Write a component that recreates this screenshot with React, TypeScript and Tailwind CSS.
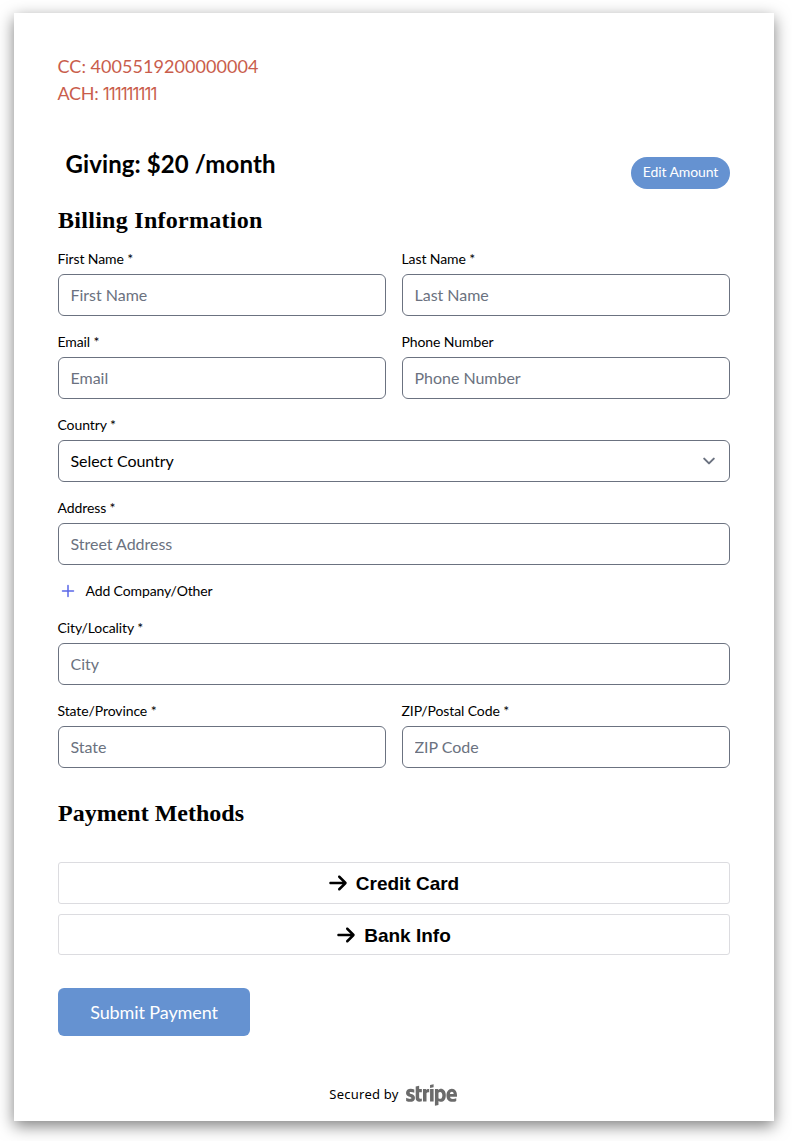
import React from "react";
import { FaStripe } from "react-icons/fa";
import { FaArrowRight } from "react-icons/fa6";

const body = "font-['Lato','Open_Sans',sans-serif]";
const labelText = "-ml-[0.5px] block h-[25px] text-[14px] leading-[20px] tracking-[-0.1px] whitespace-nowrap";

function Field({ label, placeholder }: { label: string; placeholder: string }) {
  return (
    <label className="block min-w-0 flex-1">
      <span className={labelText}>{label}</span>
      <input
        type="text"
        placeholder={placeholder}
        className="block h-[42px] w-full rounded-[6px] border border-[#6b7280] bg-white pr-3 pb-[2px] pl-[11.5px] text-[16px] leading-6 tracking-[-0.02px] placeholder:text-[#6b7280] placeholder:opacity-100"
      />
    </label>
  );
}

function PayOption({ children, className }: { children: string; className: string }) {
  return (
    <button
      type="button"
      className={`flex w-full items-center justify-center gap-[9px] rounded-[3px] border border-[#dcdce0] bg-white font-['Liberation_Sans',sans-serif] text-[19px] font-bold ${className}`}
    >
      <FaArrowRight className="h-5 w-[18px] -translate-y-px" />
      {children}
    </button>
  );
}

export default function App() {
  return (
    <div className="h-[1141px] bg-white pt-[13px] pl-[14px]">
      <main
        className={`h-[1108px] w-[760px] bg-white px-[44px] pt-[40px] text-black shadow-[0_5px_15px_rgba(0,0,0,0.5)] ${body}`}
      >
        <div className="-ml-[0.5px] h-[54px] text-[18px] leading-[27px] text-[#c95d4c]">
          <p className="tracking-[0.05px]">CC: 4005519200000004</p>
          <p className="tracking-[-0.3px]">
            ACH: <span className="font-['Inter',sans-serif] text-[17px] tracking-[-0.95px]">111111111</span>
          </p>
        </div>

        <div className="mt-[41px] flex h-[41px] justify-between pl-[7.5px]">
          <h1 className="pt-[2px] text-[24px] leading-[28px] font-bold tracking-[0.1px]">Giving: $20 /month</h1>
          <button
            type="button"
            className="mt-[9px] h-8 w-[99px] rounded-full bg-[#6592d1] pb-[2px] text-[14px] leading-5 tracking-[-0.1px] whitespace-nowrap text-white"
          >
            Edit Amount
          </button>
        </div>

        <h2 className="mt-[15px] h-8 font-['Liberation_Serif',serif] text-[24px] leading-8 font-bold tracking-[0.28px]">
          Billing Information
        </h2>

        <form className="mt-[13px] flex flex-col gap-4">
          <div className="flex gap-4">
            <Field label="First Name *" placeholder="First Name" />
            <Field label="Last Name *" placeholder="Last Name" />
          </div>
          <div className="flex gap-4">
            <Field label="Email *" placeholder="Email" />
            <Field label="Phone Number" placeholder="Phone Number" />
          </div>
          <div>
            <span className={labelText}>Country *</span>
            <button
              type="button"
              className="flex h-[42px] w-full items-center justify-between rounded-[6px] border border-[#6b7280] pr-2 pl-[11.5px] text-[16px] tracking-[-0.05px]"
            >
              <span className="pb-px">Select Country</span>
              <svg viewBox="0 0 20 20" className="h-6 w-6" fill="none" stroke="#6b7280" strokeWidth="1.7" strokeLinecap="round" strokeLinejoin="round">
                <path d="M6 8l4 4 4-4" />
              </svg>
            </button>
          </div>
          <div>
            <Field label="Address *" placeholder="Street Address" />
            <button type="button" className="mt-[16px] flex h-5 items-center text-[14px] leading-5 tracking-[-0.12px]">
              <svg viewBox="0 0 20 20" className="h-5 w-5" stroke="#5a67e8" strokeWidth="1.5" strokeLinecap="round">
                <path d="M4.5 10h11M10 4.5v11" />
              </svg>
              <span className="pl-[7.5px]">Add Company/Other</span>
            </button>
          </div>
          <div className="mt-[1px]">
            <Field label="City/Locality *" placeholder="City" />
          </div>
          <div className="flex gap-4">
            <Field label="State/Province *" placeholder="State" />
            <Field label="ZIP/Postal Code *" placeholder="ZIP Code" />
          </div>
        </form>

        <h2 className="mt-[29px] h-8 font-['Liberation_Serif',serif] text-[24px] leading-8 font-bold">
          Payment Methods
        </h2>
        <div className="mt-[33px] flex flex-col gap-[10px]">
          <PayOption className="h-[42px] pt-[2px]">Credit Card</PayOption>
          <PayOption className="h-[41px] pt-[3px]">Bank Info</PayOption>
        </div>

        <button
          type="button"
          className="mt-[33px] block h-12 w-48 rounded-[6px] bg-[#6592d1] text-[18px] tracking-[-0.1px] text-white"
        >
          Submit Payment
        </button>

        <footer className="mt-[46px] flex h-[26px] items-center justify-center gap-[7px] pr-[2px] font-['Noto_Sans',sans-serif] text-[13px] tracking-[0.25px]">
          Secured by
          <FaStripe preserveAspectRatio="none" className="h-[42px] w-[51px] text-[#6b6b6b]" />
        </footer>
      </main>
    </div>
  );
}
